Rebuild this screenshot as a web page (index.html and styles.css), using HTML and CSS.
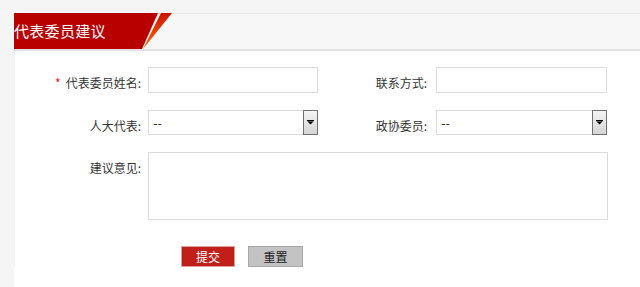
FILE: index.html
```html
<!DOCTYPE html>
<html lang="zh">
<head>
<meta charset="utf-8">
<title>代表委员建议</title>
<link rel="stylesheet" href="styles.css">
</head>
<body>
<div class="panel">
  <div class="header">
    <div class="tab"><span class="tab-title">代表委员建议</span></div>
  </div>
  <div class="content">
    <div class="form">
      <div class="label"><span class="req">*</span>代表委员姓名:</div>
      <div class="field"><div class="input"></div></div>
      <div class="label">联系方式:</div>
      <div class="field"><div class="input"></div></div>

      <div class="label">人大代表:</div>
      <div class="field">
        <div class="select"><span class="select-text">--</span><span class="select-btn"><svg width="7" height="5" viewBox="0 0 7 5"><rect x="0" y="0" width="7" height="1.2" fill="#000"/><polygon points="0.5,1.5 6.5,1.5 3.5,4.5" fill="#000"/></svg></span></div>
      </div>
      <div class="label">政协委员:</div>
      <div class="field">
        <div class="select"><span class="select-text">--</span><span class="select-btn"><svg width="7" height="5" viewBox="0 0 7 5"><rect x="0" y="0" width="7" height="1.2" fill="#000"/><polygon points="0.5,1.5 6.5,1.5 3.5,4.5" fill="#000"/></svg></span></div>
      </div>

      <div class="label">建议意见:</div>
      <div class="field wide"><div class="textarea"></div></div>
    </div>
    <div class="actions">
      <span class="btn btn-submit">提交</span>
      <span class="btn btn-reset">重置</span>
    </div>
  </div>
</div>
</body>
</html>
```
FILE: styles.css
```css
html, body {
  margin: 0;
  padding: 0;
  background: #f5f5f5;
  font-family: "Noto Sans CJK SC", "Noto Sans", "Liberation Sans", sans-serif;
  font-size: 12px;
  color: #333;
}
.panel {
  margin: 13px 0 0 14px;
  background: #fff;
  height: 274px;
}
.header {
  height: 35px;
  background: #f7f7f7;
  border-top: 1px solid #e8e8e8;
  border-bottom: 2px solid #e2e2e2;
  display: flex;
}
.tab {
  position: relative;
  margin-top: -1px;
  width: 160px;
  height: 36px;
}
.tab::before {
  content: "";
  position: absolute;
  left: 0;
  top: 0;
  width: 144px;
  height: 36px;
  background: #b90000;
  clip-path: polygon(0 0, 100% 0, calc(100% - 16px) 100%, 0 100%);
}
.tab::after {
  content: "";
  position: absolute;
  left: 128px;
  top: 0;
  width: 31px;
  height: 36px;
  background: linear-gradient(to bottom, #c81400, #ff6a00);
  clip-path: polygon(19px 0, 30px 0, 1px 100%);
}
.tab-title {
  position: relative;
  z-index: 1;
  display: block;
  color: #fff;
  font-size: 15px;
  line-height: 36px;
  padding-left: 0;
  letter-spacing: 0.3px;
}
.content {
  border-left: 1px solid #efefef;
  padding-top: 16px;
}
.form {
  display: grid;
  grid-template-columns: 133px 170px 118px 171px;
  row-gap: 17px;
}
.label {
  text-align: right;
  padding-right: 7px;
  padding-top: 8px;
  line-height: 16px;
  white-space: nowrap;
}
.label:nth-child(4n+3) {
  padding-right: 9px;
}
.req {
  color: #e0241b;
  margin-right: 5px;
}
.field.wide {
  grid-column: 2 / span 3;
}
.input {
  height: 24px;
  border: 1px solid #dadada;
  background: #fff;
}
.select {
  height: 23px;
  border: 1px solid #dadada;
  display: flex;
  align-items: stretch;
  background: #fff;
}
.select-text {
  flex: 1;
  padding-left: 4px;
  line-height: 23px;
  font-size: 13px;
  color: #333;
}
.select-btn {
  width: 13px;
  border: 1px solid #707070;
  margin: -1px -1px -1px 0;
  background: linear-gradient(to bottom, #f4f4f4, #d6d6d6);
  display: flex;
  align-items: center;
  justify-content: center;
}
.textarea {
  width: 458px;
  height: 66px;
  border: 1px solid #dadada;
  background: #fff;
}
.actions {
  display: flex;
  gap: 13px;
  padding-left: 166px;
  margin-top: 26px;
}
.btn {
  width: 52px;
  height: 19px;
  line-height: 19px;
  text-align: center;
  font-size: 12px;
  border: 1px solid #bdbdbd;
}
.btn-submit {
  background: #c11f1a;
  color: #fff;
  border-color: #d8a09e;
}
.btn-reset {
  width: 53px;
  background: #c3c3c3;
  color: #222;
  border-color: #a8a8a8;
}
```
